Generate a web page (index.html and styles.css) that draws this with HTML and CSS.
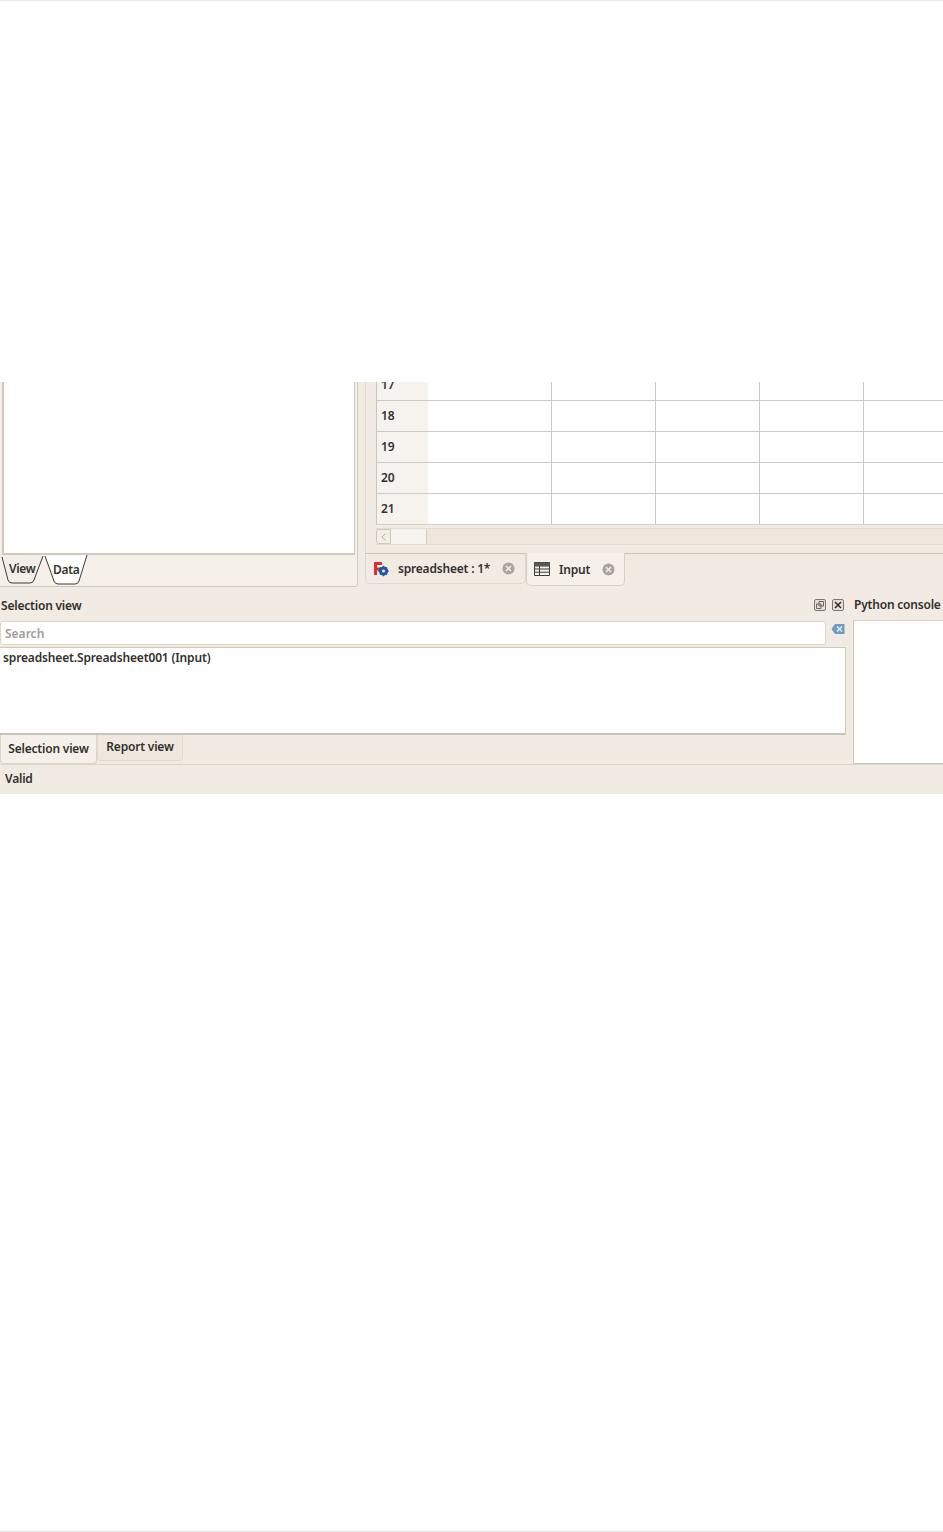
FILE: index.html
```html
<!DOCTYPE html>
<html>
<head>
    <title>Spreadsheet - Input</title>
    <link rel="stylesheet" href="styles.css">
</head>
<body>
    <div class="page">
        <div class="rule"></div>
        <div class="blank-top"></div>

        <div class="window">
            <div class="upper">
                <div class="model-panel">
                    <div class="tree-box"></div>
                    <div class="model-tabs">
                        <svg width="90" height="32" viewBox="0 0 90 32">
                            <path d="M2 2 L8 25 Q9 28 12 28 L30 28 Q33 28 34 25 L43 1" fill="#f3eee8" stroke="#3c3a38"/>
                            <path d="M45 1 L54 26 Q55 29 58 29 L75 29 Q78 29 79 26 L87 0" fill="#fff" stroke="#3c3a38"/>
                            <text x="9" y="18" class="svg-label">View</text>
                            <text x="53" y="19" class="svg-label">Data</text>
                        </svg>
                    </div>
                </div>

                <div class="sheet-panel">
                    <div class="sheet-area">
                        <div class="grid">
                            <div class="row clipped"><div class="row-head">17</div><div class="cell wide"></div><div class="cell"></div><div class="cell"></div><div class="cell"></div><div class="cell last"></div></div>
                            <div class="row"><div class="row-head">18</div><div class="cell wide"></div><div class="cell"></div><div class="cell"></div><div class="cell"></div><div class="cell last"></div></div>
                            <div class="row"><div class="row-head">19</div><div class="cell wide"></div><div class="cell"></div><div class="cell"></div><div class="cell"></div><div class="cell last"></div></div>
                            <div class="row"><div class="row-head">20</div><div class="cell wide"></div><div class="cell"></div><div class="cell"></div><div class="cell"></div><div class="cell last"></div></div>
                            <div class="row short"><div class="row-head">21</div><div class="cell wide"></div><div class="cell"></div><div class="cell"></div><div class="cell"></div><div class="cell last"></div></div>
                        </div>
                        <div class="hscroll">
                            <div class="hscroll-arrow">
                                <svg width="6" height="8" viewBox="0 0 6 8"><path d="M4.5 .5 L1 4 L4.5 7.5" fill="none" stroke="#b9b2a9"/></svg>
                            </div>
                            <div class="hscroll-thumb"></div>
                        </div>
                    </div>

                    <div class="doc-tabs">
                        <div class="doc-tab">
                            <svg class="fc-icon" width="16" height="16" viewBox="0 0 16 16">
                                <path d="M1 1 H9 V4 H4 V6.5 H7 V9.5 H4 V14 H1 Z" fill="#d8322a"/>
                                <circle cx="10.5" cy="10" r="3.4" fill="none" stroke="#1f56a8" stroke-width="2.4"/>
                                <path d="M10.5 4.8 V15.2 M5.3 10 H15.7 M6.9 6.4 L14.1 13.6 M14.1 6.4 L6.9 13.6" stroke="#1f56a8" stroke-width="1.4"/>
                                <circle cx="10.5" cy="10" r="1.5" fill="#f2ebe4"/>
                            </svg>
                            <span class="doc-name">spreadsheet : 1*</span>
                            <svg class="close-icon" width="13" height="13" viewBox="0 0 13 13">
                                <circle cx="6.5" cy="6.5" r="6" fill="#a8a49f"/>
                                <path d="M4 4 L9 9 M9 4 L4 9" stroke="#f2ebe4" stroke-width="1.6"/>
                            </svg>
                        </div>
                        <div class="doc-tab active">
                            <svg class="table-icon" width="16" height="14" viewBox="0 0 16 14">
                                <path d="M.5 .5 H15.5 V13.5 H.5 Z M.5 4 H15.5 M.5 7 H15.5 M.5 10.2 H15.5 M5.5 4 V13.5" fill="none" stroke="#3f3d3b"/>
                                <path d="M.5 .5 H15.5 V4 H.5 Z" fill="#5a5855"/>
                            </svg>
                            <span class="doc-name">Input</span>
                            <svg class="close-icon" width="13" height="13" viewBox="0 0 13 13">
                                <circle cx="6.5" cy="6.5" r="6" fill="#a8a49f"/>
                                <path d="M4 4 L9 9 M9 4 L4 9" stroke="#f2ebe4" stroke-width="1.6"/>
                            </svg>
                        </div>
                    </div>
                </div>
            </div>

            <div class="lower">
                <div class="selection-dock">
                    <div class="dock-title">
                        <span>Selection view</span>
                        <div class="dock-buttons">
                            <svg width="12" height="12" viewBox="0 0 12 12">
                                <rect x=".5" y=".5" width="11" height="11" rx="1.5" fill="#e4dfd8" stroke="#7c7873"/>
                                <path d="M5 2.5 H9.5 V7 H5 Z M2.5 5 H7 V9.5 H2.5 Z" fill="none" stroke="#6b6763"/>
                            </svg>
                            <svg width="12" height="12" viewBox="0 0 12 12">
                                <rect x=".5" y=".5" width="11" height="11" rx="1.5" fill="#e4dfd8" stroke="#7c7873"/>
                                <path d="M3 3 L9 9 M9 3 L3 9" stroke="#33312f" stroke-width="1.6"/>
                            </svg>
                        </div>
                    </div>
                    <div class="search-row">
                        <input class="search-input" type="text" placeholder="Search">
                        <svg class="clear-icon" width="14" height="12" viewBox="0 0 14 12">
                            <path d="M4 1 H13.5 V11 H4 L.5 6 Z" fill="#6f9cc4"/>
                            <path d="M6 3.5 L11 8.5 M11 3.5 L6 8.5" stroke="#e6eef5" stroke-width="1.5"/>
                        </svg>
                    </div>
                    <div class="selection-list-row">
                        <div class="selection-list">spreadsheet.Spreadsheet001 (Input)</div>
                        <div class="grip"></div>
                    </div>
                    <div class="bottom-tabs">
                        <div class="bottom-tab active">Selection view</div>
                        <div class="bottom-tab">Report view</div>
                    </div>
                </div>
                <div class="python-dock">
                    <div class="python-title">Python console</div>
                    <div class="python-box"></div>
                </div>
            </div>

            <div class="status-bar">Valid</div>
        </div>

        <div class="blank-bottom"></div>
        <div class="rule"></div>
    </div>
</body>
</html>
```

FILE: styles.css
```css
html, body {
    margin: 0;
    padding: 0;
    background-color: #fff;
}

body {
    font-family: "Noto Sans", sans-serif;
    font-size: 12px;
    font-weight: 600;
    color: #33302d;
    overflow: hidden;
}

.page {
    height: 1532px;
    display: flex;
    flex-direction: column;
}

.rule {
    height: 1px;
    background-color: #e8e8e8;
}

.blank-top {
    height: 381px;
}

.blank-bottom {
    flex: 1;
}

.window {
    height: 412px;
    background-color: #f2ebe4;
    display: flex;
    flex-direction: column;
    overflow: hidden;
}

.upper {
    height: 205px;
    display: flex;
}

.model-panel {
    width: 357px;
    background-color: #f5f0ea;
    border-right: 1px solid #d2cabf;
    border-bottom: 1px solid #cfc7bc;
    border-bottom-right-radius: 3px;
    display: flex;
    flex-direction: column;
}

.tree-box {
    height: 171px;
    margin-left: 2px;
    margin-right: 2px;
    background-color: #fff;
    border-left: 2px solid #cfc8bc;
    border-right: 1px solid #cfc8bc;
    border-bottom: 2px solid #cfc8bc;
}

.model-tabs {
    height: 31px;
}

.model-tabs svg {
    display: block;
}

.svg-label {
    font-family: "Noto Sans", sans-serif;
    font-size: 12px;
    font-weight: 600;
    fill: #33302d;
    letter-spacing: -0.3px;
}

.sheet-panel {
    flex: 1;
    min-width: 0;
    display: flex;
    flex-direction: column;
    padding-top: 0;
}

.sheet-area {
    height: 171px;
    margin-left: 7px;
    padding-left: 10px;
    border-left: 1px solid #e4dcd2;
    border-bottom: 1px solid #c9c2b9;
    overflow: hidden;
}

.grid {
    height: 142px;
    overflow: hidden;
    background-color: #fff;
    border-left: 1px solid #c9c5bf;
    border-bottom: 1px solid #d9cfc4;
}

.row {
    height: 31px;
    display: flex;
    box-sizing: border-box;
    border-bottom: 1px solid #c9c9c6;
}

.row.clipped {
    margin-top: -12px;
}

.row.short {
    border-bottom: none;
}

.row-head {
    width: 51px;
    flex-shrink: 0;
    padding-left: 4px;
    box-sizing: border-box;
    line-height: 30px;
    background-color: #f6f2ed;
}

.cell {
    width: 104px;
    flex-shrink: 0;
    box-sizing: border-box;
    border-right: 1px solid #c9c9c6;
}

.cell.wide {
    width: 124px;
}

.cell.last {
    flex: 1;
    border-right: none;
}

.hscroll {
    height: 15px;
    margin-top: 3px;
    display: flex;
    background-color: #efe5dc;
    border-top: 1px solid #e4dbd1;
    border-bottom: 1px solid #e4dbd1;
}

.hscroll-arrow {
    width: 15px;
    display: flex;
    align-items: center;
    justify-content: center;
    background-color: #f3eee8;
    border: 1px solid #cfc8bd;
    border-radius: 3px 0 0 3px;
    box-sizing: border-box;
}

.hscroll-thumb {
    width: 35px;
    background-color: #f6f2ed;
    border-right: 1px solid #d6cec4;
}

.doc-tabs {
    height: 33px;
    padding-left: 7px;
    display: flex;
    align-items: flex-start;
}

.doc-tab {
    height: 30px;
    display: flex;
    align-items: center;
    box-sizing: border-box;
    border: 1px solid #e0d8ce;
    border-top: none;
    border-radius: 0 0 5px 5px;
}

.doc-tab:first-child {
    width: 161px;
    padding-left: 7px;
}

.doc-tab.active {
    width: 99px;
    height: 33px;
    padding-left: 7px;
    padding-top: 0;
    background-color: #f5f0ea;
    border-color: #d8d0c6;
    margin-top: -1px;
}

.fc-icon {
    margin-right: 9px;
}

.table-icon {
    margin-right: 9px;
}

.doc-name {
    letter-spacing: -0.2px;
}

.close-icon {
    margin-left: 12px;
}

.lower {
    height: 177px;
    display: flex;
}

.selection-dock {
    width: 846px;
    flex-shrink: 0;
    display: flex;
    flex-direction: column;
}

.dock-title {
    height: 34px;
    display: flex;
    align-items: center;
    justify-content: space-between;
    padding-left: 1px;
    padding-top: 2px;
    box-sizing: border-box;
    letter-spacing: -0.2px;
}

.dock-buttons {
    display: flex;
    gap: 6px;
    padding-right: 2px;
}

.search-row {
    height: 25px;
    display: flex;
}

.search-input {
    width: 826px;
    height: 24px;
    box-sizing: border-box;
    font-family: "Noto Sans", sans-serif;
    font-size: 12px;
    font-weight: 600;
    padding: 0 4px;
    background-color: #fff;
    border: 1px solid #ded6cb;
    border-radius: 3px;
    outline: none;
}

.search-input::placeholder {
    color: #a09c97;
}

.clear-icon {
    margin-left: 5px;
    margin-top: 2px;
}

.selection-list-row {
    height: 88px;
    margin-top: 1px;
    display: flex;
}

.selection-list {
    flex: 1;
    box-sizing: border-box;
    padding: 1px 3px;
    background-color: #fff;
    border-top: 1px solid #cfc8bc;
    border-right: 1px solid #cfc8bc;
    border-bottom: 2px solid #c9c2b7;
    letter-spacing: -0.15px;
}

.bottom-tabs {
    height: 29px;
    display: flex;
    align-items: flex-start;
}

.bottom-tab {
    width: 86px;
    height: 26px;
    line-height: 24px;
    text-align: center;
    box-sizing: border-box;
    background-color: #efe8e0;
    border: 1px solid #e2dacf;
    border-top: none;
    border-radius: 0 0 4px 4px;
    letter-spacing: -0.2px;
}

.bottom-tab.active {
    width: 97px;
    height: 29px;
    line-height: 28px;
    background-color: #f5f0ea;
    border-color: #dcd4c9;
}

.python-dock {
    flex: 1;
    padding-left: 7px;
    display: flex;
    flex-direction: column;
}

.python-title {
    height: 33px;
    padding-top: 2px;
    padding-left: 1px;
    box-sizing: border-box;
    line-height: 32px;
    white-space: nowrap;
    letter-spacing: -0.2px;
}

.python-box {
    height: 143px;
    background-color: #fff;
    border-left: 1px solid #cfc8bc;
    border-top: 1px solid #d9d1c6;
    border-bottom: 1px solid #d0c9be;
}

.status-bar {
    height: 30px;
    line-height: 27px;
    padding-left: 5px;
    box-sizing: border-box;
    border-top: 1px solid #ddd5ca;
    letter-spacing: -0.2px;
}
```
